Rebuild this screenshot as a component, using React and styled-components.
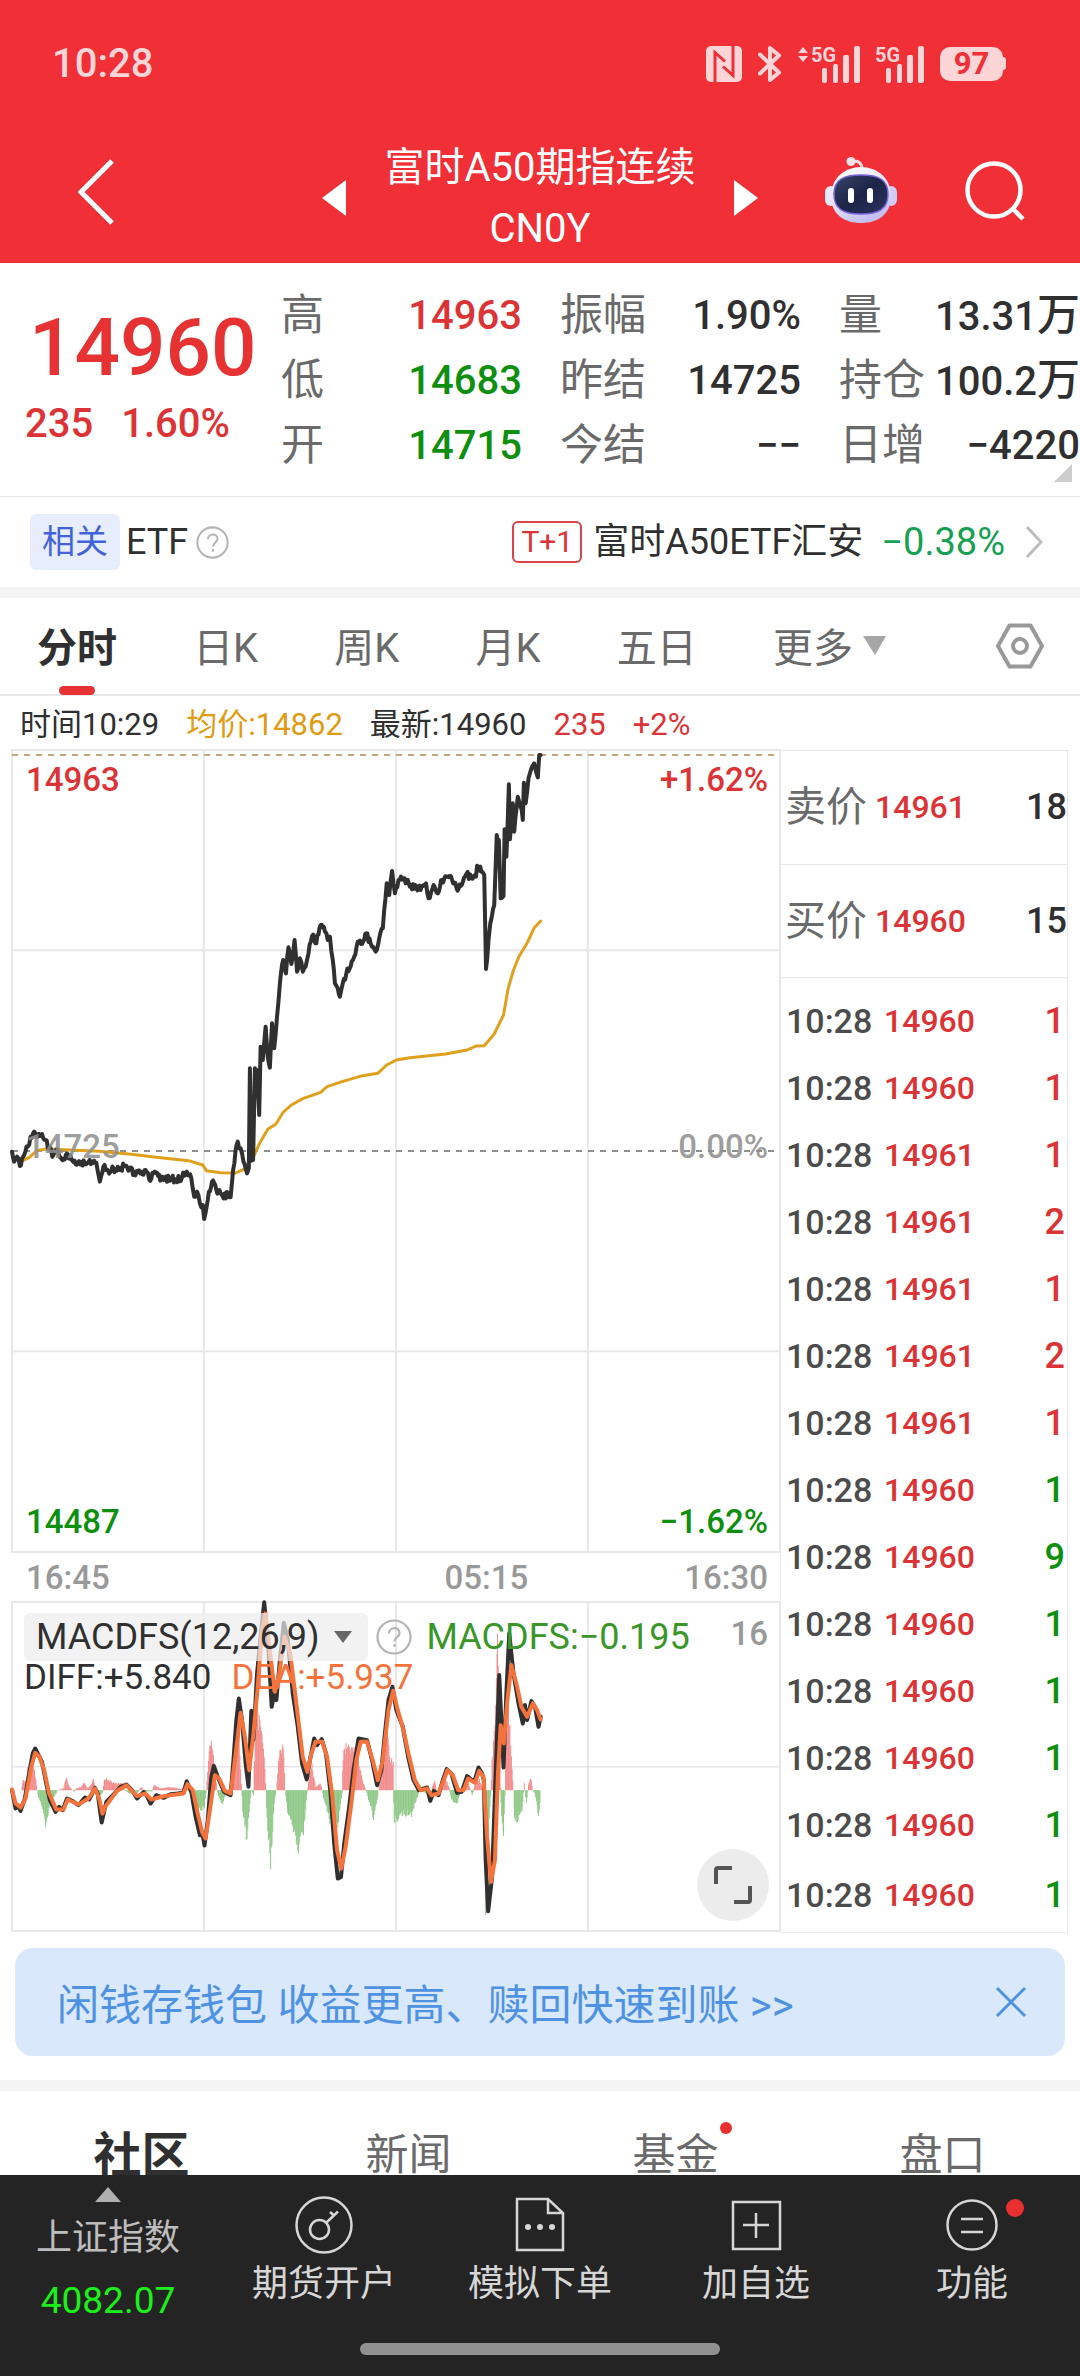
import React from "react";
import styled, { createGlobalStyle } from "styled-components";

const RED = "#dc3336";
const GREEN = "#0f8f0f";
const INK = "#303030";
const MUTED = "#6a6a6a";
const LINE = "#e8e8e8";
const TEXT_FONT = 'Roboto, "Noto Sans CJK SC", sans-serif';

const GlobalStyle = createGlobalStyle`
  *, *::before, *::after { box-sizing: border-box; }
  body { margin: 0; background: #fff; color: ${INK}; font-family: ${TEXT_FONT}; }
  h1, dl, dd, dt, p { margin: 0; font-weight: inherit; }
  button { border: 0; padding: 0; background: none; font: inherit; color: inherit; cursor: pointer; }
  a { color: inherit; text-decoration: none; }
  svg { display: block; }
`;

/* ---------- shell ---------- */

const Shell = styled.div`
  display: flex;
  flex-direction: column;
  height: 100vh;
`;

const Content = styled.main`
  flex: 1;
  min-height: 0;
  overflow: hidden;
`;

const Header = styled.header`
  flex: none;
  background: #f12f37;
  color: #fff;
`;

const StatusBar = styled.div`
  display: flex;
  align-items: center;
  justify-content: space-between;
  height: 128px;
  padding: 0 74px 0 52px;
  color: #fdd5d7;
`;

const Clock = styled.time`
  font-size: 40px;
  line-height: 48px;
  font-weight: 500;
`;

const StatusIcons = styled.div`
  display: flex;
  align-items: center;
  gap: 16px;
`;

const Battery = styled.span`
  display: flex;
  align-items: center;
  justify-content: center;
  position: relative;
  width: 63px;
  height: 34px;
  margin-right: 3px;
  border-radius: 10px;
  background: #fdd5d7;
  color: #f12f37;
  font-size: 31px;
  line-height: 34px;
  font-weight: 700;

  &::after {
    content: "";
    position: absolute;
    right: -3px;
    top: 10px;
    width: 3px;
    height: 13px;
    border-radius: 0 3px 3px 0;
    background: #fdd5d7;
  }
`;

const NavBar = styled.nav`
  display: grid;
  grid-template-columns: 1fr auto 1fr;
  align-items: start;
  height: 135px;
  padding: 9px 54px 0 78px;
`;

const NavBack = styled.div`
  padding-top: 22px;
`;

const TitleGroup = styled.div`
  display: flex;
  align-items: center;
  gap: 38px;
  margin-left: -24px;
`;

const Title = styled.h1`
  text-align: center;
  font-size: 40px;
  line-height: 61px;
  white-space: pre-line;
`;

const NavActions = styled.div`
  display: flex;
  align-items: center;
  justify-content: flex-end;
  gap: 68px;
  padding-top: 20px;
`;

/* ---------- quote ---------- */

const Quote = styled.section`
  position: relative;
  display: grid;
  grid-template-columns: 218px repeat(3, minmax(0, 1fr));
  column-gap: 38px;
  padding: 20px 0 18px 25px;
  border-bottom: 1px solid ${LINE};
`;

const Headline = styled.div`
  padding-top: 13px;
  color: #e63232;
  font-weight: 500;
  white-space: nowrap;
`;

const Price = styled.p`
  padding-left: 4px;
  font-size: 80px;
  line-height: 104px;
`;

const Change = styled.p`
  display: flex;
  gap: 28px;
  font-size: 40px;
  line-height: 48px;
  color: ${RED};
`;

const Stats = styled.dl`
  display: grid;
  grid-template-rows: repeat(3, 65px);
`;

const Stat = styled.div`
  display: flex;
  align-items: center;
  justify-content: space-between;
  line-height: 65px;
  white-space: nowrap;
`;

const StatLabel = styled.dt`
  font-size: 43px;
  color: ${MUTED};
`;

const StatValue = styled.dd`
  font-size: 40px;
  font-weight: 500;
  color: ${(p) => p.$color || INK};
`;

const Unit = styled.span`
  font-size: 43px;
`;

const Corner = styled.svg`
  position: absolute;
  right: 8px;
  bottom: 14px;
`;

/* ---------- related ETF ---------- */

const EtfRow = styled.section`
  display: flex;
  align-items: center;
  height: 90px;
  padding: 0 37px 0 30px;
  font-size: 36px;
  line-height: 48px;
`;

const RelatedTag = styled.span`
  margin-right: 6px;
  padding: 4px 12px;
  border-radius: 6px;
  background: #e7edfd;
  color: #4262dc;
  font-size: 33px;
`;

const HelpButton = styled.button`
  margin-left: ${(p) => p.$gap}px;
`;

const EtfLink = styled.a`
  display: flex;
  align-items: center;
  margin-left: auto;
`;

const Settle = styled.span`
  margin-right: 11px;
  padding: 0 7px;
  border: 2px solid #d9444b;
  border-radius: 6px;
  color: ${RED};
  font-size: 30px;
  line-height: 38px;
`;

const EtfChange = styled.span`
  margin: 0 20px 0 18px;
  color: #16a054;
  font-size: 38px;
`;

const Divider = styled.div`
  height: 11px;
  background: #f4f4f4;
`;

/* ---------- period tabs ---------- */

const PeriodBar = styled.div`
  display: flex;
  align-items: center;
  justify-content: space-between;
  height: 98px;
  padding: 0 36px 0 37px;
  border-bottom: 2px solid ${LINE};
`;

const Periods = styled.div`
  display: flex;
  justify-content: space-between;
  flex: 0 1 849px;
`;

const PeriodTab = styled.button`
  position: relative;
  display: flex;
  align-items: center;
  gap: 10px;
  height: 97px;
  padding-bottom: 2px;
  font-size: 40px;
  font-weight: ${(p) => (p.$active ? 700 : 400)};
  color: ${(p) => (p.$active ? INK : MUTED)};

  &::after {
    content: "";
    display: ${(p) => (p.$active ? "block" : "none")};
    position: absolute;
    left: calc(50% - 18px);
    bottom: 0;
    width: 36px;
    height: 9px;
    border-radius: 5px;
    background: #e63232;
  }
`;

/* ---------- chart ---------- */

const Readout = styled.p`
  display: flex;
  gap: 27px;
  padding-left: 20px;
  font-size: 31px;
  line-height: 58px;
  height: 54px;
`;

const Tint = styled.span`
  color: ${(p) => p.$color};
`;

const Board = styled.section`
  display: grid;
  grid-template-columns: 1fr 288px;
  padding: 0 12px;
`;

const Charts = styled.div`
  display: flex;
  flex-direction: column;
`;

const Plot = styled.div`
  position: relative;
  height: ${(p) => p.$height}px;

  > svg { width: 100%; height: 100%; overflow: visible; }
`;

const PlotLabel = styled.span`
  position: absolute;
  ${(p) => (p.$right ? "right: 12px;" : "left: 14px;")}
  top: ${(p) => p.$top};
  font-size: 33px;
  line-height: 40px;
  font-weight: 500;
  color: ${(p) => p.$color};
`;

const Axis = styled.div`
  display: flex;
  align-items: center;
  height: 50px;
  padding: 0 12px 0 14px;
  font-size: 33px;
  font-weight: 500;
  color: #999;

  > span:nth-child(2) { margin-left: auto; }
  > span:nth-child(3) { margin-left: 156px; }
`;

const Legend = styled.div`
  position: absolute;
  left: 12px;
  top: 11px;
  right: 12px;
`;

const LegendRow = styled.div`
  display: flex;
  align-items: center;
  font-size: ${(p) => p.$size}px;
  line-height: 34px;
`;

const IndicatorButton = styled.button`
  display: flex;
  align-items: center;
  gap: 14px;
  height: 48px;
  padding: 0 16px 0 12px;
  border-radius: 6px;
  background: rgba(236, 236, 236, 0.7);
`;

const LegendText = styled.span`
  margin-left: ${(p) => p.$gap || 0}px;
  color: ${(p) => p.$color || INK};
`;

const Scale = styled.span`
  margin-left: auto;
  padding-bottom: 6px;
  font-size: 33px;
  font-weight: 500;
  color: #999;
`;

const ExpandButton = styled.button`
  position: absolute;
  right: 11px;
  bottom: 10px;
  display: grid;
  place-items: center;
  width: 72px;
  height: 72px;
  border-radius: 50%;
  background: #ececec;
`;

/* ---------- order book ---------- */

const Book = styled.div`
  border: 1px solid ${LINE};
`;

const Sheet = styled.table`
  width: 100%;
  border-collapse: collapse;
  font-weight: 500;
`;

const DepthRow = styled.tr`
  height: 113px;
  border-bottom: 1px solid ${LINE};
`;

const TickRow = styled.tr`
  height: 67px;
  &:first-child { height: 77px; }
  &:first-child > td { padding-top: 10px; }
  &:last-child { height: 73px; }
`;

const Side = styled.th`
  width: 90px;
  padding: 0 0 0 4px;
  text-align: left;
  vertical-align: middle;
  font-size: 41px;
  font-weight: 400;
  line-height: 48px;
  color: ${MUTED};
`;

const Time = styled.td`
  width: 99px;
  padding: 0 0 0 5px;
  font-size: 34px;
  line-height: 48px;
  color: #4c4c4c;
`;

const Deal = styled.td`
  padding: 0 0 0 4px;
  font-size: 32px;
  line-height: 48px;
  color: ${RED};
`;

const Amount = styled.td`
  padding: 0 ${(p) => (p.$inset ? 2 : 0)}px 0 0;
  text-align: right;
  font-size: 36px;
  line-height: 48px;
  color: ${(p) => p.$color || INK};
`;

/* ---------- promo and lower tabs ---------- */

const Promo = styled.aside`
  display: flex;
  align-items: center;
  justify-content: space-between;
  height: 108px;
  margin: 15px 15px 24px;
  padding: 0 38px 0 42px;
  border-radius: 18px;
  background: #dae8fb;
  color: #4f92e2;
  font-size: 42px;
`;

const Sections = styled.div`
  display: grid;
  grid-template-columns: repeat(4, 1fr);
  height: 120px;
  padding: 0 4px 0 8px;
`;

const SectionTab = styled.button`
  font-size: ${(p) => (p.$active ? 48 : 43)}px;
  font-weight: ${(p) => (p.$active ? 700 : 400)};
  color: ${(p) => (p.$active ? INK : MUTED)};
`;

const Dotted = styled.span`
  position: relative;

  &::after {
    content: "";
    position: absolute;
    right: ${(p) => p.$x}px;
    top: ${(p) => p.$y}px;
    width: ${(p) => p.$size}px;
    height: ${(p) => p.$size}px;
    border-radius: 50%;
    background: #e93030;
  }
`;

/* ---------- footer ---------- */

const Footer = styled.footer`
  flex: none;
  background: #242424;
  color: #d6d6d6;
`;

const Actions = styled.div`
  display: grid;
  grid-template-columns: repeat(5, 1fr);
  height: 168px;
`;

const Action = styled.button`
  display: flex;
  flex-direction: column;
  align-items: center;
  padding-top: 20px;
  font-size: 36px;
  line-height: 54px;
  gap: 2px;
`;

const IndexButton = styled(Action)`
  padding-top: 12px;
  gap: 9px;
  color: #bdbdbd;
`;

const IndexValue = styled.span`
  color: #1cf01c;
  font-size: 37px;
`;

const HomeBar = styled.div`
  width: 360px;
  height: 12px;
  margin: 0 auto 21px;
  border-radius: 6px;
  background: #919191;
`;

/* ---------- icons ---------- */

const Nfc = () => (
  <svg width="36" height="36" viewBox="0 0 36 36" aria-hidden="true">
    <rect width="36" height="36" rx="5" fill="#fdd5d7" />
    <path d="M9 36V6.500L19 15.500M27 0V29.500L17 20.500" fill="none" stroke="#f12f37" strokeWidth="3" />
  </svg>
);

const Bluetooth = () => (
  <svg width="24" height="38" viewBox="0 0 24 38" fill="none" stroke="#fdd5d7" strokeWidth="4" strokeLinejoin="round" strokeLinecap="round" aria-hidden="true">
    <path d="M2 9.500L21 27.500L12 35V3L21 10.500L2 28.500" />
  </svg>
);

const SignalIcon = styled.svg`
  overflow: visible;
`;

const Signal = ({ arrows }) => (
  <SignalIcon width={arrows ? 62 : 48} height="37" viewBox={arrows ? "-14 0 62 37" : "0 0 48 37"} fill="#fdd5d7" aria-hidden="true">
    {arrows && <path d="M-9 1l5 6h-10zM-9 16l5-6h-10z" />}
    <text x="-1" y="16" fontFamily="Roboto" fontWeight="700" fontSize="20">5G</text>
    <rect x="10" y="22" width="5" height="15" rx="2" />
    <rect x="21" y="18" width="5" height="19" rx="2" />
    <rect x="31" y="9" width="6" height="28" rx="2" />
    <rect x="42" y="0" width="6" height="37" rx="2" />
  </SignalIcon>
);

const Back = () => (
  <svg width="36" height="66" viewBox="0 0 36 66" fill="none" stroke="#fff" strokeWidth="5" aria-hidden="true">
    <path d="M34 2L3 33L34 64" />
  </svg>
);

const Triangle = ({ w, h, d, fill }) => (
  <svg width={w} height={h} viewBox={`0 0 ${w} ${h}`} fill={fill} aria-hidden="true">
    <path d={d} />
  </svg>
);

const Robot = () => (
  <svg width="72" height="67" viewBox="0 0 72 67" aria-hidden="true">
    <defs>
      <linearGradient id="shell" x1="0" y1="0" x2="0.4" y2="1">
        <stop offset="0" stopColor="#fff" />
        <stop offset="0.6" stopColor="#e6e4f8" />
        <stop offset="1" stopColor="#c4c1f2" />
      </linearGradient>
      <linearGradient id="visor" x1="0" y1="0" x2="1" y2="1">
        <stop offset="0" stopColor="#38456a" />
        <stop offset="0.5" stopColor="#1c2547" />
        <stop offset="1" stopColor="#2b3260" />
      </linearGradient>
    </defs>
    <path d="M27 5c6-2 10 1 10 7" fill="none" stroke="#f6dfe6" strokeWidth="3" />
    <circle cx="26" cy="4.500" r="4.500" fill="#fae3e8" />
    <rect x="0" y="29" width="12" height="20" rx="6" fill="#e9e9fb" />
    <rect x="60" y="29" width="12" height="20" rx="6" fill="#cfcdf6" />
    <path d="M36 10C52 10 66 21 66 39C66 58 52 66 36 66S6 58 6 39C6 21 20 10 36 10Z" fill="url(#shell)" />
    <path d="M36 18C54 18 63 23 63 37C63 52 54 57 36 57S9 52 9 37C9 23 18 18 36 18Z" fill="url(#visor)" stroke="#7a62dc" strokeWidth="1.500" />
    <rect x="23" y="31" width="6" height="15" rx="3" fill="#fff" />
    <rect x="42" y="31" width="6" height="15" rx="3" fill="#fff" />
  </svg>
);

const Search = () => (
  <svg width="61" height="60" viewBox="0 0 61 60" fill="none" stroke="#fff" strokeWidth="4.500" aria-hidden="true">
    <circle cx="29" cy="29" r="26.500" />
    <path d="M47 47L58 58" />
  </svg>
);

const Help = ({ size }) => (
  <svg width={size} height={size} viewBox="0 0 36 36" aria-hidden="true">
    <circle cx="18" cy="18" r="16.500" fill="none" stroke="#b4b4b4" strokeWidth="2.200" />
    <path d="M13 14.500c0-7 10.500-7 10.500-.500c0 4-5 4.500-5 8.500M18.500 25v3" fill="none" stroke="#b4b4b4" strokeWidth="2.200" />
  </svg>
);

const Chevron = () => (
  <svg width="18" height="32" viewBox="0 0 18 32" fill="none" stroke="#bcbcbc" strokeWidth="3" aria-hidden="true">
    <path d="M2 1L16 16L2 31" />
  </svg>
);

const Hexagon = () => (
  <svg width="48" height="46" viewBox="0 0 48 46" fill="none" stroke="#999" strokeWidth="4" strokeLinejoin="round" aria-hidden="true">
    <path d="M13.500 2.500H34.500L46 23L34.500 43.500H13.500L2 23Z" />
    <circle cx="24" cy="23" r="7" />
  </svg>
);

const Expand = () => (
  <svg width="38" height="38" viewBox="0 0 38 38" fill="none" stroke="#555" strokeWidth="4" aria-hidden="true">
    <path d="M2 18V4Q2 2 4 2H18M36 20V34Q36 36 34 36H20" />
  </svg>
);

const Close = () => (
  <svg width="32" height="32" viewBox="0 0 32 32" fill="none" stroke="#4f92e2" strokeWidth="3" aria-hidden="true">
    <path d="M2 2L30 30M30 2L2 30" />
  </svg>
);

const FooterIcon = ({ children }) => (
  <svg width="60" height="60" viewBox="0 0 60 60" fill="none" stroke="#d6d6d6" strokeWidth="2.500" aria-hidden="true">
    {children}
  </svg>
);

/* ---------- chart data ---------- */

const PRICE = "36,1235 42,1265 50,1250 58,1278 70,1245 80,1220 88,1190 98,1175 108,1190 120,1182 130,1200 140,1225 152,1245 165,1235 175,1258 190,1240 205,1262 220,1268 240,1272 260,1265 272,1268 282,1325 292,1280 305,1292 320,1285 335,1290 350,1278 362,1292 378,1295 395,1300 410,1290 420,1318 432,1300 445,1308 460,1320 480,1315 495,1322 512,1312 522,1298 538,1315 546,1370 554,1355 562,1390 570,1395 574,1437 584,1380 596,1325 608,1350 620,1360 628,1375 640,1358 648,1372 655,1290 662,1230 668,1205 676,1225 684,1265 690,1285 694,1300 699,1285 702,985 706,1262 711,1260 716,985 722,990 728,1125 732,920 738,960 746,860 752,950 758,983 764,850 770,925 778,830 786,730 795,660 803,700 810,622 818,672 827,600 834,695 842,655 850,695 858,680 866,640 876,588 888,610 900,555 912,575 920,600 926,590 934,660 940,730 948,745 954,770 962,730 972,700 984,680 994,650 1004,605 1016,612 1028,580 1040,610 1054,635 1064,595 1074,565 1078,510 1085,430 1092,465 1100,393 1108,460 1118,420 1135,415 1150,440 1165,435 1180,450 1195,430 1202,475 1216,435 1228,460 1240,420 1252,410 1268,420 1280,443 1295,435 1308,402 1322,415 1335,410 1338,377 1350,395 1358,405 1363,687 1370,600 1375,550 1386,495 1393,285 1399,300 1404,475 1412,468 1415,268 1420,350 1427,133 1430,298 1438,190 1442,275 1452,170 1460,200 1466,240 1469,128 1474,190 1482,115 1490,85 1498,70 1508,112 1512,45 1516,45";
const AVERAGE = "66,1262 85,1252 105,1232 130,1227 200,1230 280,1234 370,1243 440,1252 530,1262 570,1275 580,1292 620,1298 662,1299 685,1288 712,1250 730,1208 752,1168 775,1152 795,1117 818,1095 850,1076 900,1057 918,1040 960,1025 1010,1009 1060,1000 1085,975 1112,960 1150,953 1250,942 1310,930 1335,918 1358,917 1386,882 1412,825 1425,745 1440,690 1455,650 1480,605 1497,565 1516,543";
const DIFF = "36,690 46,745 52,735 60,752 72,715 84,640 94,580 101,565 108,580 120,605 132,670 142,720 158,755 168,740 178,750 190,715 205,722 222,735 240,712 252,718 268,683 276,700 287,787 300,725 320,703 340,680 356,673 372,690 386,715 405,695 415,710 424,730 440,705 460,713 480,702 500,700 516,698 525,663 538,695 550,770 562,825 570,825 575,856 584,780 594,650 601,617 612,650 630,695 648,705 656,600 664,480 671,415 680,480 690,610 698,680 706,452 712,540 722,340 732,230 742,127 752,230 763,440 770,400 776,420 786,300 797,188 808,240 822,400 836,500 848,610 861,658 870,600 882,535 890,555 903,537 915,580 928,700 938,850 948,955 957,950 966,850 980,740 992,630 1006,535 1030,540 1044,600 1058,675 1070,630 1080,520 1090,420 1101,380 1112,450 1130,500 1145,590 1160,660 1175,690 1198,682 1207,722 1217,692 1230,705 1242,660 1253,627 1266,640 1282,698 1295,695 1310,648 1330,665 1342,622 1352,640 1357,660 1362,900 1369,1053 1380,950 1388,700 1400,345 1412,622 1420,400 1428,220 1440,340 1454,430 1466,490 1472,435 1478,480 1490,423 1500,440 1510,500 1516,470";
const DEA = "36,688 46,730 60,742 74,715 90,620 101,578 112,588 126,630 140,700 160,748 180,748 192,718 222,733 250,715 268,685 280,715 289,760 300,735 330,692 356,675 386,708 410,700 426,718 460,708 516,700 527,672 542,690 556,760 568,815 578,835 590,750 604,645 616,655 632,692 648,700 660,600 676,458 688,530 700,630 712,520 724,380 736,210 745,160 756,260 772,395 784,340 799,230 815,280 832,430 850,590 863,635 874,580 886,545 905,545 918,590 932,700 946,870 958,925 970,860 986,730 1000,600 1012,545 1030,545 1046,600 1060,660 1074,600 1090,450 1103,392 1116,450 1132,510 1148,590 1164,660 1180,690 1198,685 1210,705 1230,700 1255,630 1270,645 1285,690 1300,690 1313,655 1332,668 1344,632 1356,650 1366,830 1377,965 1388,900 1396,650 1404,495 1413,550 1422,430 1434,315 1448,370 1462,440 1478,470 1494,430 1506,450 1516,478";
const HISTOGRAM = "62,0 68,30 76,25 80,60 88,80 95,85 103,30 107,0 110,-20 118,-40 131,-110 140,-50 158,-12 164,0 180,5 188,35 196,12 210,-5 216,5 230,10 240,25 246,5 255,12 264,32 272,-3 280,-20 290,-6 295,36 305,30 320,22 345,18 352,0 365,-10 388,-8 398,10 405,-4 428,-3 434,15 450,5 470,8 490,8 510,3 525,12 532,-4 545,-25 558,-60 575,-50 580,0 584,60 592,155 602,90 610,0 616,-25 626,-40 636,-8 644,4 650,30 655,80 668,250 676,60 682,-60 694,-145 702,-40 706,0 712,-15 715,100 722,240 732,170 740,140 747,0 750,-80 760,-220 770,-40 776,0 784,110 795,145 801,0 808,-60 822,-110 838,-170 852,-120 862,-10 868,40 876,70 886,10 900,20 908,-20 920,-70 935,-120 948,-100 960,-10 963,100 974,135 990,120 1006,90 1020,20 1030,-10 1048,-80 1060,-20 1064,20 1076,110 1085,190 1095,90 1103,80 1106,-90 1130,-70 1155,-70 1172,-15 1178,0 1207,-15 1214,12 1220,30 1226,-12 1235,15 1248,40 1260,5 1266,-25 1280,-45 1290,-8 1300,15 1310,30 1325,-15 1333,25 1345,30 1358,0 1362,-420 1368,-150 1376,-20 1380,80 1388,200 1395,460 1402,100 1405,-40 1412,-140 1416,-20 1418,100 1426,260 1434,100 1440,0 1443,-90 1455,-85 1464,-60 1470,20 1476,-40 1482,15 1488,40 1494,0 1500,-10 1510,-75 1516,-15";

const parse = (text) => text.split(" ").map((pair) => pair.split(",").map(Number));
const noise = (n) => {
  const v = Math.sin(n * 127.1) * 43758.5453;
  return v - Math.floor(v) - 0.5;
};

// Adds minute-by-minute wobble between the recorded turning points.
const roughen = (text, size) => {
  const pts = parse(text);
  const out = [];
  pts.forEach(([x, y], i) => {
    out.push(`${x},${y}`);
    const next = pts[i + 1];
    if (!next) return;
    const steps = Math.floor((next[0] - x) / 3);
    for (let s = 1; s < steps; s += 1) {
      const t = s / steps;
      const px = x + (next[0] - x) * t;
      out.push(`${px.toFixed(1)},${(y + (next[1] - y) * t + noise(px) * size).toFixed(1)}`);
    }
  });
  return out.join(" ");
};

const bars = (text, sign) => {
  const pts = parse(text);
  let d = "";
  for (let i = 0; i < pts.length - 1; i += 1) {
    const [x0, h0] = pts[i];
    const [x1, h1] = pts[i + 1];
    for (let x = x0; x < x1; x += 2) {
      const h = (h0 + ((h1 - h0) * (x - x0)) / (x1 - x0)) * (1 + noise(x) * 0.3);
      if (h * sign > 0.5) d += `M${x} 690V${(690 - h).toFixed(1)}`;
    }
  }
  return d;
};

const Trace = ({ points, color, width }) => (
  <polyline points={points} fill="none" stroke={color} strokeWidth={width} strokeLinejoin="round" strokeLinecap="round" vectorEffect="non-scaling-stroke" />
);

const Grid = ({ d, color = LINE, dash, width = 2 }) => (
  <path d={d} fill="none" stroke={color} strokeWidth={width} strokeDasharray={dash} vectorEffect="non-scaling-stroke" />
);

/* ---------- content ---------- */

const STATS = [
  [["高", "14963", RED], ["低", "14683", GREEN], ["开", "14715", GREEN]],
  [["振幅", "1.90%"], ["昨结", "14725"], ["今结", "−−"]],
  [["量", "13.31", INK, "万"], ["持仓", "100.2", INK, "万"], ["日增", "−4220"]],
];

const TICKS = [
  ["14960", 1, 1], ["14960", 1, 1], ["14961", 1, 1], ["14961", 2, 1], ["14961", 1, 1], ["14961", 2, 1], ["14961", 1, 1],
  ["14960", 1, 0], ["14960", 9, 0], ["14960", 1, 0], ["14960", 1, 0], ["14960", 1, 0], ["14960", 1, 0], ["14960", 1, 0],
];

export default function App() {
  return (
    <Shell>
      <GlobalStyle />
      <Header>
        <StatusBar>
          <Clock>10:28</Clock>
          <StatusIcons>
            <Nfc />
            <Bluetooth />
            <Signal arrows />
            <Signal />
            <Battery>97</Battery>
          </StatusIcons>
        </StatusBar>
        <NavBar>
          <NavBack><button aria-label="返回"><Back /></button></NavBack>
          <TitleGroup>
            <button aria-label="上一个"><Triangle w={24} h={36} d="M24 0V36L0 18Z" fill="#fff" /></button>
            <Title>{"富时A50期指连续\nCN0Y"}</Title>
            <button aria-label="下一个"><Triangle w={24} h={36} d="M0 0V36L24 18Z" fill="#fff" /></button>
          </TitleGroup>
          <NavActions>
            <button aria-label="助手"><Robot /></button>
            <button aria-label="搜索"><Search /></button>
          </NavActions>
        </NavBar>
      </Header>

      <Content>
        <Quote>
          <Headline>
            <Price>14960</Price>
            <Change><span>235</span><span>1.60%</span></Change>
          </Headline>
          {STATS.map((column, i) => (
            <Stats key={i}>
              {column.map(([label, value, color, unit]) => (
                <Stat key={label}>
                  <StatLabel>{label}</StatLabel>
                  <StatValue $color={color}>{value}{unit && <Unit>{unit}</Unit>}</StatValue>
                </Stat>
              ))}
            </Stats>
          ))}
          <Corner width="18" height="18" viewBox="0 0 18 18" aria-hidden="true"><path d="M18 0V18H0Z" fill="#ccc" /></Corner>
        </Quote>

        <EtfRow>
          <RelatedTag>相关</RelatedTag>
          ETF
          <HelpButton $gap={8} aria-label="ETF说明"><Help size={33} /></HelpButton>
          <EtfLink href="#etf">
            <Settle>T+1</Settle>
            富时A50ETF汇安
            <EtfChange>−0.38%</EtfChange>
            <Chevron />
          </EtfLink>
        </EtfRow>
        <Divider />

        <PeriodBar>
          <Periods>
            <PeriodTab $active>分时</PeriodTab>
            <PeriodTab>日K</PeriodTab>
            <PeriodTab>周K</PeriodTab>
            <PeriodTab>月K</PeriodTab>
            <PeriodTab>五日</PeriodTab>
            <PeriodTab>更多<Triangle w={23} h={19} d="M0 0H23L12 19Z" fill="#a6a6a6" /></PeriodTab>
          </Periods>
          <button aria-label="设置"><Hexagon /></button>
        </PeriodBar>

        <Readout>
          <span>时间10:29</span>
          <Tint $color="#e09b12">均价:14862</Tint>
          <span>最新:14960</span>
          <Tint $color={RED}>235</Tint>
          <Tint $color={RED}>+2%</Tint>
        </Readout>

        <Board>
          <Charts>
            <Plot $height={802}>
              <svg viewBox="36 30 2150 2406" preserveAspectRatio="none" role="img" aria-label="分时走势">
                <Grid d="M36 30H2186V2436H36ZM573 30V2436M1111 30V2436M1648 30V2436M36 631H2186M36 1834H2186" />
                <Grid d="M36 45H2180" color="#c3a77c" dash="6 6" />
                <Grid d="M36 1233H2180" color="#8f8f8f" dash="6 6" />
                <Trace points={AVERAGE} color="#e0a01c" width={3} />
                <Trace points={roughen(PRICE, 22)} color="#303030" width={4} />
              </svg>
              <PlotLabel $top="10px" $color={RED}>14963</PlotLabel>
              <PlotLabel $top="10px" $right $color={RED}>+1.62%</PlotLabel>
              <PlotLabel $top="377px" $color="rgba(145,145,145,0.9)">14725</PlotLabel>
              <PlotLabel $top="377px" $right $color="rgba(145,145,145,0.9)">0.00%</PlotLabel>
              <PlotLabel $top="752px" $color={GREEN}>14487</PlotLabel>
              <PlotLabel $top="752px" $right $color={GREEN}>−1.62%</PlotLabel>
            </Plot>
            <Axis><span>16:45</span><span>05:15</span><span>16:30</span></Axis>
            <Plot $height={329}>
              <svg viewBox="36 126 2150 986" preserveAspectRatio="none" role="img" aria-label="MACDFS">
                <Grid d="M36 126H2186V1112H36ZM573 126V1112M1111 126V1112M1648 126V1112" />
                <Grid d="M36 620H2186" color="#d8d8d8" width={1} />
                <Grid d={bars(HISTOGRAM, 1)} color="#f28b8b" width={1} />
                <Grid d={bars(HISTOGRAM, -1)} color="#8fc887" width={1} />
                <Trace points={DIFF} color="#303030" width={4} />
                <Trace points={DEA} color="#f4733c" width={4} />
              </svg>
              <Legend>
                <LegendRow $size={36}>
                  <IndicatorButton>
                    MACDFS(12,26,9)
                    <Triangle w={18} h={12} d="M0 0H18L9 12Z" fill="#666" />
                  </IndicatorButton>
                  <HelpButton $gap={8} aria-label="指标说明"><Help size={36} /></HelpButton>
                  <LegendText $gap={15} $color="#3a9628">MACDFS:−0.195</LegendText>
                  <Scale>16</Scale>
                </LegendRow>
                <LegendRow $size={35}>
                  <LegendText>DIFF:+5.840</LegendText>
                  <LegendText $gap={20} $color="#f4733c">DEA:+5.937</LegendText>
                </LegendRow>
              </Legend>
              <ExpandButton aria-label="全屏"><Expand /></ExpandButton>
            </Plot>
          </Charts>

          <Book>
            <Sheet>
              <tbody>
                <DepthRow><Side scope="row">卖价</Side><Deal>14961</Deal><Amount>18</Amount></DepthRow>
                <DepthRow><Side scope="row">买价</Side><Deal>14960</Deal><Amount>15</Amount></DepthRow>
              </tbody>
            </Sheet>
            <Sheet>
              <tbody>
                {TICKS.map(([price, amount, up], i) => (
                  <TickRow key={i}>
                    <Time>10:28</Time>
                    <Deal>{price}</Deal>
                    <Amount $inset $color={up ? RED : GREEN}>{amount}</Amount>
                  </TickRow>
                ))}
              </tbody>
            </Sheet>
          </Book>
        </Board>

        <Promo>
          <a href="#wallet">闲钱存钱包 收益更高、赎回快速到账 &gt;&gt;</a>
          <button aria-label="关闭"><Close /></button>
        </Promo>
        <Divider />

        <Sections>
          <SectionTab $active>社区</SectionTab>
          <SectionTab>新闻</SectionTab>
          <SectionTab><Dotted $x={-13} $y={-8} $size={12}>基金</Dotted></SectionTab>
          <SectionTab>盘口</SectionTab>
        </Sections>
      </Content>

      <Footer>
        <Actions>
          <IndexButton>
            <Triangle w={26} h={15} d="M13 0L26 15H0Z" fill="#b0b0b0" />
            <span>上证指数</span>
            <IndexValue>4082.07</IndexValue>
          </IndexButton>
          <Action>
            <FooterIcon>
              <circle cx="30" cy="30" r="27.500" />
              <circle cx="25.500" cy="34.500" r="9.500" />
              <path d="M32.500 27.500L44 16.500M36 17L40.500 21" />
            </FooterIcon>
            期货开户
          </Action>
          <Action>
            <FooterIcon>
              <path d="M7 4H38L53 18V55H7ZM38 4V18H53" />
              <path d="M18 32h.01M30 32h.01M42 32h.01" strokeWidth="6" strokeLinecap="round" />
            </FooterIcon>
            模拟下单
          </Action>
          <Action>
            <FooterIcon><path d="M7 7H54V54H7ZM30 18V43M17 30H43" /></FooterIcon>
            加自选
          </Action>
          <Action>
            <Dotted $x={-22} $y={4} $size={18}>
              <FooterIcon>
                <circle cx="30" cy="30" r="24.500" />
                <path d="M19 24H41M19 37H41" />
              </FooterIcon>
            </Dotted>
            功能
          </Action>
        </Actions>
        <HomeBar />
      </Footer>
    </Shell>
  );
}
